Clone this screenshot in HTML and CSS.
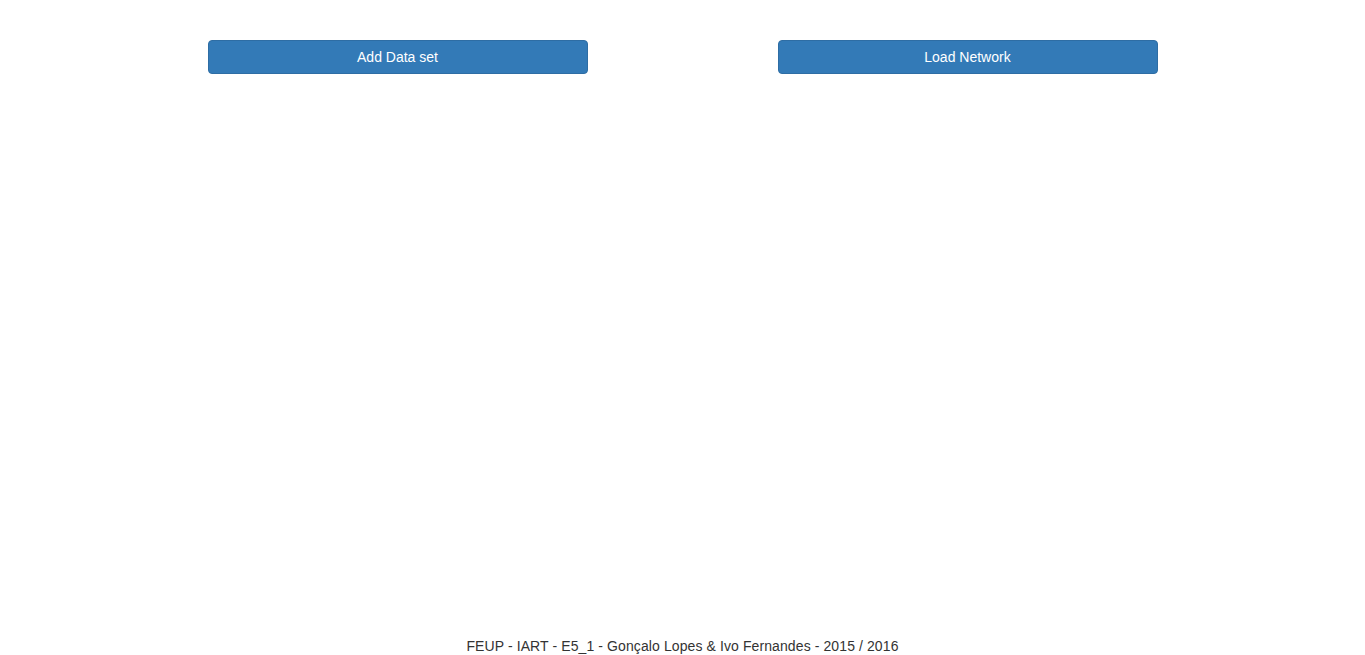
FILE: index.html
```html
<!DOCTYPE html>
<html lang="en">
<head>
<meta charset="utf-8">
<title>Neural Network</title>
<link rel="stylesheet" href="styles.css">
</head>
<body>
<div class="page">
  <main class="actions">
    <button class="btn btn-primary">Add Data set</button>
    <button class="btn btn-primary">Load Network</button>
  </main>
  <footer class="footer">FEUP - IART - E5_1 - Gonçalo Lopes &amp; Ivo Fernandes - 2015 / 2016</footer>
</div>
</body>
</html>
```
FILE: styles.css
```css
html, body {
  margin: 0;
  padding: 0;
  background: #fff;
}
body {
  font-family: "Liberation Sans", Arial, Helvetica, sans-serif;
  font-size: 14px;
  line-height: 20px;
  color: #333;
}
.page {
  display: flex;
  flex-direction: column;
  min-height: 100vh;
  height: 655px;
}
.actions {
  flex: 1;
  display: flex;
  justify-content: center;
  align-items: flex-start;
  gap: 190px;
  padding-top: 40px;
}
.btn {
  width: 380px;
  box-sizing: border-box;
  padding: 6px 12px;
  font-family: inherit;
  font-size: 14px;
  line-height: 20px;
  border-radius: 4px;
  border: 1px solid transparent;
  cursor: pointer;
  text-align: center;
}
.btn-primary {
  color: #fff;
  background-color: #337ab7;
  border-color: #2e6da4;
}
.footer {
  text-align: center;
  height: 20px;
  padding-top: 1px;
  margin-bottom: -1px;
  letter-spacing: 0.1px;
}
```
